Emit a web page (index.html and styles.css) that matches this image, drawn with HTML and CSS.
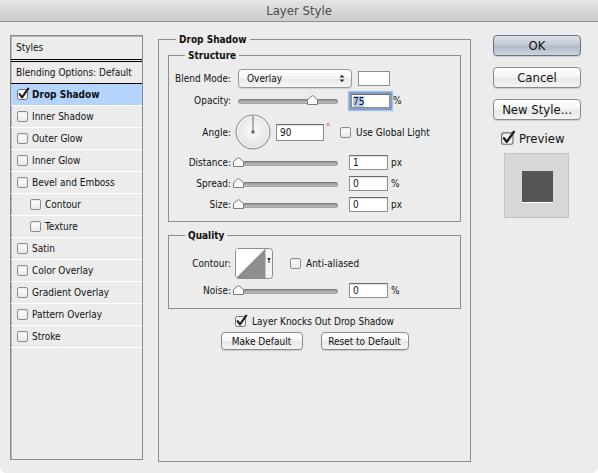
FILE: index.html
```html
<!DOCTYPE html>
<html lang="en">
<head>
    <meta charset="UTF-8">
    <title>Layer Style</title>
    <link rel="stylesheet" href="styles.css">
</head>
<body>
    <div class="window">
        <div class="titlebar">Layer Style</div>

        <div class="dialog">
            <div class="styles-list">
                <div class="list-head">Styles</div>
                <div class="list-blend">Blending Options: Default</div>
                <div class="list-item selected">
                    <svg class="tick" width="14" height="14" viewBox="0 0 14 14"><rect x="0.5" y="2.5" width="10" height="10" rx="2" fill="#f6f6f6" stroke="#6f6f6f"/><path d="M2.6 7.2 L5 10.4 L11.2 1.6" fill="none" stroke="#1c1c1c" stroke-width="2.1" stroke-linecap="round" stroke-linejoin="round"/></svg>
                    Drop Shadow
                </div>
                <div class="list-item"><span class="box"></span>Inner Shadow</div>
                <div class="list-item"><span class="box"></span>Outer Glow</div>
                <div class="list-item"><span class="box"></span>Inner Glow</div>
                <div class="list-item"><span class="box"></span>Bevel and Emboss</div>
                <div class="list-item sub"><span class="box"></span>Contour</div>
                <div class="list-item sub"><span class="box"></span>Texture</div>
                <div class="list-item"><span class="box"></span>Satin</div>
                <div class="list-item"><span class="box"></span>Color Overlay</div>
                <div class="list-item"><span class="box"></span>Gradient Overlay</div>
                <div class="list-item"><span class="box"></span>Pattern Overlay</div>
                <div class="list-item"><span class="box"></span>Stroke</div>
            </div>

            <fieldset class="group effect">
                <legend>Drop Shadow</legend>

                <fieldset class="group structure">
                    <legend>Structure</legend>

                    <div class="row blend-row">
                        <span class="label">Blend Mode:</span>
                        <div class="select">
                            <span>Overlay</span>
                            <svg width="6" height="9" viewBox="0 0 6 9"><path d="M0.5 3.5 L3 0.8 L5.5 3.5 Z M0.5 5.5 L3 8.2 L5.5 5.5 Z" fill="#333"/></svg>
                        </div>
                        <span class="swatch"></span>
                    </div>

                    <div class="row opacity-row">
                        <span class="label">Opacity:</span>
                        <div class="slider">
                            <svg class="thumb" style="left: 72px" width="11" height="10" viewBox="0 0 11 10"><path d="M0.5 4.5 L5.5 0.5 L10.5 4.5 V9.5 H0.5 Z" fill="#fbfbfb" stroke="#7c7c7c"/></svg>
                        </div>
                        <span class="field focused"><span class="sel">75</span></span>
                        <span class="unit">%</span>
                    </div>

                    <div class="row angle-row">
                        <span class="label">Angle:</span>
                        <svg class="dial" width="36" height="36" viewBox="0 0 36 36">
                            <defs>
                                <radialGradient id="dial-fill" cx="50%" cy="45%" r="55%">
                                    <stop offset="0" stop-color="#fbfbfb"/>
                                    <stop offset="0.8" stop-color="#e6e6e6"/>
                                    <stop offset="1" stop-color="#cfcfcf"/>
                                </radialGradient>
                            </defs>
                            <circle cx="18" cy="18" r="17" fill="url(#dial-fill)" stroke="#8c8c8c"/>
                            <circle cx="18" cy="18" r="15.5" fill="none" stroke="#f6f6f6"/>
                            <line x1="18" y1="18" x2="18" y2="2" stroke="#666"/>
                            <rect x="16.5" y="16.5" width="3" height="3" fill="#666"/>
                        </svg>
                        <span class="field angle">90</span>
                        <span class="degree">°</span>
                        <span class="box"></span>
                        <span class="check-text">Use Global Light</span>
                    </div>

                    <div class="row slider-row">
                        <span class="label">Distance:</span>
                        <div class="slider">
                            <svg class="thumb" style="left: -2px" width="11" height="10" viewBox="0 0 11 10"><path d="M0.5 4.5 L5.5 0.5 L10.5 4.5 V9.5 H0.5 Z" fill="#fbfbfb" stroke="#7c7c7c"/></svg>
                        </div>
                        <span class="field">1</span>
                        <span class="unit">px</span>
                    </div>

                    <div class="row slider-row">
                        <span class="label">Spread:</span>
                        <div class="slider">
                            <svg class="thumb" style="left: -2px" width="11" height="10" viewBox="0 0 11 10"><path d="M0.5 4.5 L5.5 0.5 L10.5 4.5 V9.5 H0.5 Z" fill="#fbfbfb" stroke="#7c7c7c"/></svg>
                        </div>
                        <span class="field">0</span>
                        <span class="unit">%</span>
                    </div>

                    <div class="row slider-row">
                        <span class="label">Size:</span>
                        <div class="slider">
                            <svg class="thumb" style="left: -2px" width="11" height="10" viewBox="0 0 11 10"><path d="M0.5 4.5 L5.5 0.5 L10.5 4.5 V9.5 H0.5 Z" fill="#fbfbfb" stroke="#7c7c7c"/></svg>
                        </div>
                        <span class="field">0</span>
                        <span class="unit">px</span>
                    </div>
                </fieldset>

                <fieldset class="group quality">
                    <legend>Quality</legend>

                    <div class="row contour-row">
                        <span class="label">Contour:</span>
                        <svg class="contour" width="38" height="31" viewBox="0 0 38 31">
                            <rect x="0.5" y="0.5" width="37" height="30" rx="3" fill="#f4f4f4" stroke="#8c8c8c"/>
                            <rect x="1" y="1" width="29" height="29" fill="#fff"/>
                            <polygon points="1,30 30,1 30,30" fill="#8e8e8e"/>
                            <line x1="30.5" y1="1" x2="30.5" y2="30" stroke="#c4c4c4"/>
                            <path d="M32.3 10 L35.7 10 L34 13 Z M33.5 12 H34.5 V15 H33.5 Z" fill="#222"/>
                        </svg>
                        <span class="box"></span>
                        <span class="check-text">Anti-aliased</span>
                    </div>

                    <div class="row slider-row">
                        <span class="label">Noise:</span>
                        <div class="slider">
                            <svg class="thumb" style="left: -2px" width="11" height="10" viewBox="0 0 11 10"><path d="M0.5 4.5 L5.5 0.5 L10.5 4.5 V9.5 H0.5 Z" fill="#fbfbfb" stroke="#7c7c7c"/></svg>
                        </div>
                        <span class="field">0</span>
                        <span class="unit">%</span>
                    </div>
                </fieldset>

                <div class="knock-row">
                    <svg class="tick" width="14" height="14" viewBox="0 0 14 14"><rect x="0.5" y="2.5" width="10" height="10" rx="2" fill="#f6f6f6" stroke="#6f6f6f"/><path d="M2.6 7.2 L5 10.4 L11.2 1.6" fill="none" stroke="#1c1c1c" stroke-width="2.1" stroke-linecap="round" stroke-linejoin="round"/></svg>
                    <span>Layer Knocks Out Drop Shadow</span>
                </div>

                <div class="default-row">
                    <button class="btn small">Make Default</button>
                    <button class="btn small">Reset to Default</button>
                </div>
            </fieldset>

            <div class="actions">
                <button class="btn big primary">OK</button>
                <button class="btn big">Cancel</button>
                <button class="btn big">New Style...</button>
                <div class="preview-row">
                    <svg class="tick" width="16" height="16" viewBox="0 0 14 14"><rect x="0.5" y="2.5" width="10" height="10" rx="2" fill="#f6f6f6" stroke="#6f6f6f"/><path d="M2.6 7.2 L5 10.4 L11.2 1.6" fill="none" stroke="#1c1c1c" stroke-width="2.1" stroke-linecap="round" stroke-linejoin="round"/></svg>
                    <span>Preview</span>
                </div>
                <div class="preview">
                    <div class="preview-square"></div>
                </div>
            </div>
        </div>
    </div>
</body>
</html>
```

FILE: styles.css
```css
* {
    box-sizing: border-box;
}
body {
    margin: 0;
    background-color: #fff;
    font-family: "DejaVu Sans Condensed", "DejaVu Sans", sans-serif;
    font-stretch: condensed;
    font-size: 10px;
    color: #111;
}
.window {
    width: 598px;
    height: 473px;
    background-color: #ececec;
    border-radius: 0 0 6px 6px;
    overflow: hidden;
    display: flex;
    flex-direction: column;
}
.titlebar {
    height: 22px;
    flex: none;
    background: linear-gradient(#e5e5e5, #cbcbcb);
    border-bottom: 1px solid #8f8f8f;
    text-align: center;
    font-size: 13px;
    line-height: 21px;
    color: #4b4b4b;
}
.dialog {
    display: flex;
    align-items: flex-start;
    padding: 11px 0 0 10px;
}

/* styles list */
.styles-list {
    width: 133px;
    height: 425px;
    margin-top: 2px;
    border: 1px solid #8a8a8a;
    box-shadow: inset 1px 1px 0 #b5b5b5;
}
.list-head {
    height: 26px;
    padding-left: 5px;
    line-height: 23px;
    border-bottom: 3px double #000;
}
.list-blend {
    height: 22px;
    padding-left: 5px;
    line-height: 21px;
    border-bottom: 1px solid #000;
}
.list-item {
    height: 22px;
    display: flex;
    align-items: center;
    gap: 4px;
    padding-left: 6px;
    border-bottom: 1px solid #fff;
}
.list-item.sub {
    padding-left: 19px;
}
.list-item.selected {
    background-color: #b4d3fd;
    font-weight: bold;
}
.list-item.selected .tick {
    margin-right: -3px;
    margin-top: -2px;
}
.box {
    display: inline-block;
    flex: none;
    width: 11px;
    height: 11px;
    border: 1px solid #8c8c8c;
    border-radius: 2px;
    background: linear-gradient(#ffffff, #e9e9e9);
    box-shadow: inset 0 1px 1px rgba(0, 0, 0, 0.08);
}
.tick {
    flex: none;
    display: block;
}

/* fieldsets */
.group {
    margin: 0;
    border: 1px solid #8e8e8e;
    min-width: 0;
}
.group legend {
    margin-left: 8px;
    padding: 0 3px;
    font-weight: bold;
    line-height: 13px;
}
.effect {
    width: 313px;
    height: 429px;
    margin-left: 15px;
    padding: 0 9px;
}
.structure {
    margin-top: 3px;
    padding: 5px 0 6px 0;
}
.quality {
    margin-top: 7px;
    padding: 5px 0 7px 0;
}
.structure legend,
.quality legend {
    margin-left: 16px;
}
.row {
    display: flex;
    align-items: center;
}
.label {
    width: 62px;
    flex: none;
    text-align: right;
}
.blend-row {
    height: 22px;
}
.opacity-row {
    height: 23px;
}
.angle-row {
    height: 40px;
}
.slider-row {
    height: 21px;
}
.contour-row {
    height: 33px;
}

/* controls */
.select {
    width: 114px;
    height: 19px;
    margin-left: 7px;
    padding: 0 6px 0 8px;
    display: flex;
    align-items: center;
    justify-content: space-between;
    border: 1px solid #989898;
    border-radius: 4px;
    background: linear-gradient(#ffffff, #f3f3f3 50%, #e9e9e9 51%, #f6f6f6);
    box-shadow: 0 1px 1px rgba(0, 0, 0, 0.12);
}
.swatch {
    width: 32px;
    height: 15px;
    margin-left: 6px;
    border: 1px solid #8c8c8c;
    background-color: #fff;
}
.slider {
    position: relative;
    width: 106px;
    height: 12px;
    margin-left: 4px;
}
.slider::before {
    content: "";
    position: absolute;
    left: 3px;
    right: 3px;
    top: 4px;
    height: 5px;
    border-radius: 3px;
    background: linear-gradient(#8c8c8c, #c9c9c9);
    box-shadow: inset 0 0 0 1px rgba(0, 0, 0, 0.15);
}
.thumb {
    position: absolute;
    top: 0;
    display: block;
}
.field {
    width: 39px;
    height: 15px;
    margin-left: 8px;
    padding-left: 3px;
    line-height: 13px;
    border: 1px solid #8e8e8e;
    border-top-color: #6b6b6b;
    background-color: #fff;
    box-shadow: inset 0 1px 1px rgba(0, 0, 0, 0.12);
}
.field.focused {
    height: 14px;
    margin-left: 10px;
    padding-left: 1px;
    box-shadow: 0 0 0 2px #7f9fc9, 0 0 1px 3px #aac2e2;
}
.sel {
    background-color: #b3cdef;
}
.field.angle {
    width: 48px;
    height: 17px;
    margin-left: 5px;
    line-height: 15px;
}
.unit {
    margin-left: 3px;
}
.degree {
    align-self: flex-start;
    margin: 10px 0 0 2px;
    color: #c0392b;
    font-size: 9px;
}
.dial {
    margin-left: 4px;
    flex: none;
}
.angle-row .box {
    margin-left: 10px;
}
.check-text {
    margin-left: 5px;
}
.contour {
    margin-left: 4px;
    flex: none;
}
.contour-row .box {
    margin-left: 17px;
}

/* bottom of effect panel */
.knock-row {
    display: flex;
    align-items: center;
    justify-content: center;
    gap: 3px;
    height: 14px;
    margin-top: 5px;
}
.default-row {
    display: flex;
    justify-content: center;
    gap: 18px;
    margin-top: 4px;
}
.btn {
    font-family: inherit;
    font-stretch: condensed;
    color: #111;
    border: 1px solid #8b8b8b;
    border-radius: 4px;
    background: linear-gradient(#ffffff, #f4f4f4 50%, #e6e6e6 51%, #f5f5f5);
    box-shadow: 0 1px 1px rgba(0, 0, 0, 0.15);
    padding: 0;
}
.btn.small {
    height: 18px;
    font-size: 10px;
}
.default-row .btn:first-child {
    width: 82px;
}
.default-row .btn:last-child {
    width: 88px;
}

/* right column */
.actions {
    width: 88px;
    margin-left: 22px;
    padding-top: 2px;
    display: flex;
    flex-direction: column;
}
.btn.big {
    height: 21px;
    font-size: 13px;
    margin-bottom: 11px;
}
.btn.primary {
    border-color: #6c7380;
    background: linear-gradient(#dde3ea, #c0c8d4 50%, #aeb8c6 51%, #cdd4de);
}
.preview-row {
    display: flex;
    align-items: center;
    gap: 2px;
    height: 14px;
    margin: 0 0 8px 8px;
    font-size: 13px;
}
.preview {
    width: 65px;
    height: 65px;
    margin-left: 11px;
    padding: 17px;
    border: 1px solid #c4c4c4;
    background-color: #d7d7d7;
}
.preview-square {
    width: 31px;
    height: 31px;
    background-color: #555;
    box-shadow: 0 1px 0 #fff;
}
```
